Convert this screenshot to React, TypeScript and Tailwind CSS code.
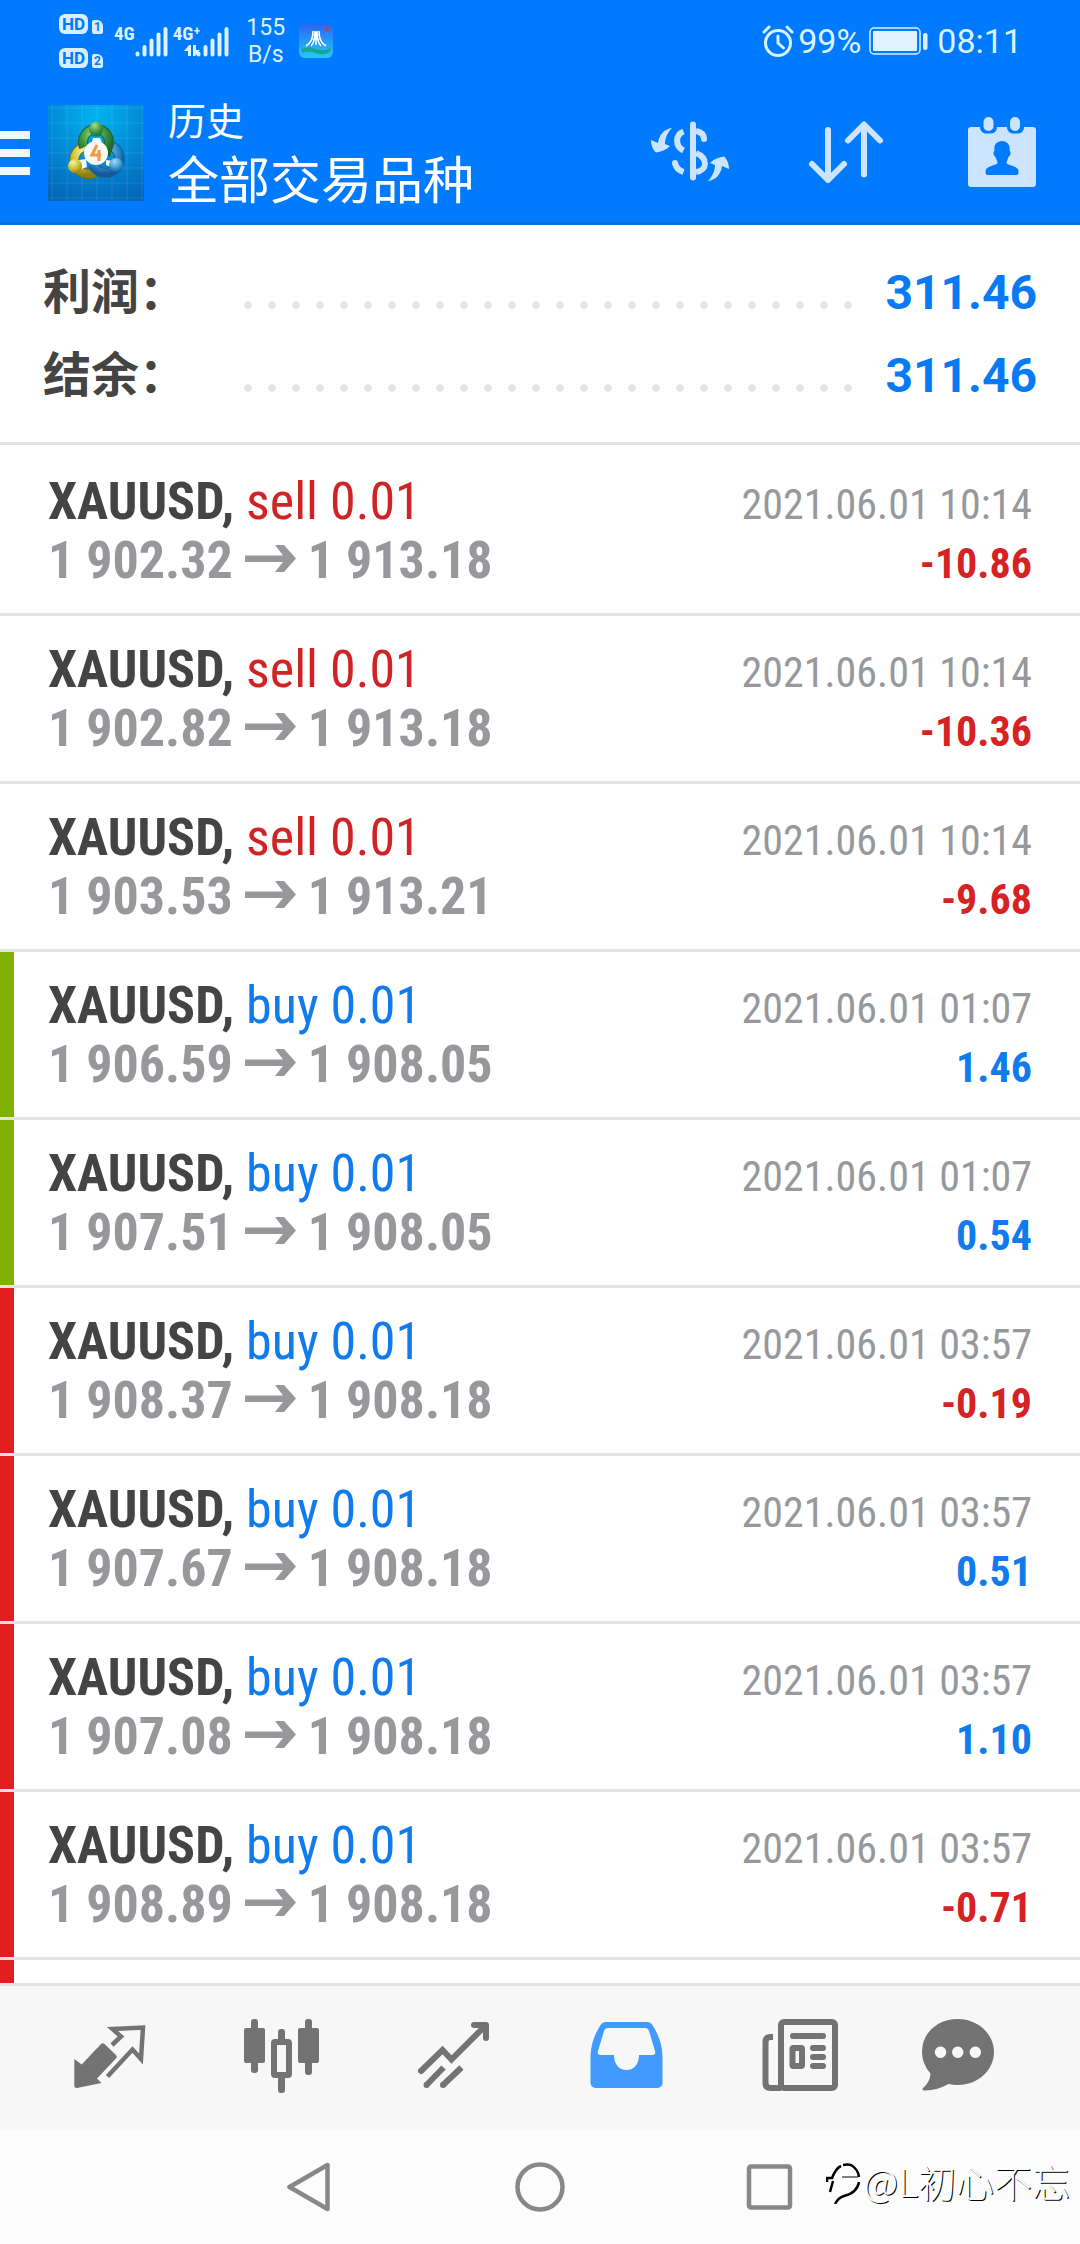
import React, { useState } from 'react';
import clsx from 'clsx';

type Deal = {
  side: 'buy' | 'sell';
  open: string;
  close: string;
  time: string;
  profit: string;
  mark?: 'tp' | 'sl';
};

const deals: Deal[] = [
  { side: 'sell', open: '1 902.32', close: '1 913.18', time: '2021.06.01 10:14', profit: '-10.86' },
  { side: 'sell', open: '1 902.82', close: '1 913.18', time: '2021.06.01 10:14', profit: '-10.36' },
  { side: 'sell', open: '1 903.53', close: '1 913.21', time: '2021.06.01 10:14', profit: '-9.68' },
  { side: 'buy', open: '1 906.59', close: '1 908.05', time: '2021.06.01 01:07', profit: '1.46', mark: 'tp' },
  { side: 'buy', open: '1 907.51', close: '1 908.05', time: '2021.06.01 01:07', profit: '0.54', mark: 'tp' },
  { side: 'buy', open: '1 908.37', close: '1 908.18', time: '2021.06.01 03:57', profit: '-0.19', mark: 'sl' },
  { side: 'buy', open: '1 907.67', close: '1 908.18', time: '2021.06.01 03:57', profit: '0.51', mark: 'sl' },
  { side: 'buy', open: '1 907.08', close: '1 908.18', time: '2021.06.01 03:57', profit: '1.10', mark: 'sl' },
  { side: 'buy', open: '1 908.89', close: '1 908.18', time: '2021.06.01 03:57', profit: '-0.71', mark: 'sl' },
];

const summary = [
  { label: '利润', value: '311.46' },
  { label: '结余', value: '311.46' },
];

function HdBadge({ sim }: { sim: string }) {
  return (
    <div className="flex items-end gap-1">
      <span className="flex h-5 w-[29px] items-center justify-center rounded-md bg-[#d6eeff] font-['Roboto'] text-[17px] leading-none font-bold text-[#007aff]">
        HD
      </span>
      <span className="flex h-3.5 w-[11px] items-center justify-center rounded-tr-md rounded-xs bg-[#d6eeff] font-['Roboto'] text-[12px] leading-none font-bold text-[#007aff]">
        {sim}
      </span>
    </div>
  );
}

function Signal({ label, active }: { label: string; active?: boolean }) {
  return (
    <div className="flex h-[31px]">
      <div className="flex flex-col justify-between">
        <span className="font-['Roboto_Condensed'] text-[19px] leading-4 font-bold">{label}</span>
        {active && (
          <svg viewBox="0 0 16 12" className="h-3 w-4 self-end" fill="currentColor">
            <path d="M0 6L5 0h2v11H4V6zM9 0h3v5h4l-5 6H9z" />
          </svg>
        )}
      </div>
      <svg
        viewBox="0 0 34 31"
        className={clsx('h-[31px] w-[34px]', active && '-ml-1')}
        stroke="currentColor"
        strokeWidth="4"
        strokeLinecap="round"
      >
        <path d="M2.5 27.5v1M9.500 21v7.500M16.500 14.500v14M23.500 8.500v20M30.500 3v25.500" />
      </svg>
    </div>
  );
}

function StatusBar() {
  return (
    <div className="flex h-[78px] items-center justify-between pt-1 pr-[58px] pl-[59px] font-['Roboto'] text-[#dcf3ff]">
      <div className="flex items-center">
        <div className="flex w-[55px] flex-col gap-3.5">
          <HdBadge sim="1" />
          <HdBadge sim="2" />
        </div>
        <div className="flex gap-1">
          <Signal label="4G" />
          <Signal label="4G⁺" active />
        </div>
        <div className="ml-4 text-center text-[23px] leading-[27px]">
          155
          <br />
          B/s
        </div>
        <svg viewBox="0 0 34 34" className="ml-3.5 size-[34px]">
          <defs>
            <linearGradient id="badge" x1="0" y1="0" x2="0" y2="1">
              <stop offset="0" stopColor="#2a66f2" />
              <stop offset="1" stopColor="#25c9ff" />
            </linearGradient>
          </defs>
          <rect width="34" height="34" rx="6" fill="url(#badge)" />
          <path d="M2 26q8-3 15 0t15-1M3 28q7-3 14 0t14-1" stroke="#19a58a" strokeWidth="2" fill="none" />
          <g stroke="#fff" strokeWidth="1.500" fill="none">
            <path d="M14 7q0 11-7 15M16 7q0 11-4 15M18 7q0 11 4 15M20 7q0 11 7 15M17 8v13" />
          </g>
          <path d="M13.500 11h7M12.500 15h9" stroke="#fff" strokeWidth="1" />
          <path d="M26 3h4v2l-2 3h-1V5h-1z" fill="#b8405f" />
        </svg>
      </div>

      <div className="flex items-center text-[34px] leading-10">
        <svg viewBox="0 0 32 32" className="mr-1 size-8" fill="none" stroke="currentColor" strokeWidth="3">
          <circle cx="16" cy="18" r="12.500" />
          <path d="M16 11v7l5.500 5M2 7l5-5M30 7l-5-5" strokeLinecap="round" />
        </svg>
        99%
        <svg viewBox="0 0 60 28" className="mx-2 h-7 w-[60px]">
          <rect x="1" y="1" width="50" height="26" rx="4" fill="none" stroke="currentColor" strokeWidth="1.500" />
          <rect x="4" y="4" width="44" height="20" rx="1" fill="#e4f1ff" />
          <rect x="54" y="6" width="4.500" height="17" rx="2" fill="currentColor" />
        </svg>
        08:11
      </div>
    </div>
  );
}

function AppLogo() {
  return (
    <svg viewBox="0 0 96 96" className="size-24">
      <defs>
        <radialGradient id="sky" cx="0.5" cy="0.1" r="1">
          <stop offset="0" stopColor="#00b4ee" />
          <stop offset="0.5" stopColor="#0289d6" />
          <stop offset="1" stopColor="#0463b4" />
        </radialGradient>
        <radialGradient id="green" cx="0.4" cy="0.25" r="0.8">
          <stop offset="0" stopColor="#a6dd92" />
          <stop offset="0.6" stopColor="#3d9440" />
          <stop offset="1" stopColor="#1d6a2b" />
        </radialGradient>
        <radialGradient id="yellow" cx="0.35" cy="0.25" r="0.8">
          <stop offset="0" stopColor="#f6f2a0" />
          <stop offset="0.6" stopColor="#c9bd2e" />
          <stop offset="1" stopColor="#8c7f12" />
        </radialGradient>
        <radialGradient id="blue" cx="0.4" cy="0.25" r="0.8">
          <stop offset="0" stopColor="#a5dcf7" />
          <stop offset="0.6" stopColor="#3a95d3" />
          <stop offset="1" stopColor="#125a9c" />
        </radialGradient>
      </defs>
      <rect width="96" height="96" fill="url(#sky)" />
      <path
        d="M4 0v96M19 0v96M34 0v96M49 0v96M64 0v96M79 0v96M94 0v96M0 3h96M0 18h96M0 33h96M0 48h96M0 63h96M0 78h96M0 93h96"
        stroke="#fff"
        strokeOpacity="0.1"
      />
      <path d="M40 41a14 14 0 1 0 9 25" fill="none" stroke="#6f6a14" strokeWidth="10" />
      <path d="M40 41a14 14 0 1 0 9 25" fill="none" stroke="url(#yellow)" strokeWidth="8" />
      <path d="M60 40a14 14 0 1 1-15 20" fill="none" stroke="#155a94" strokeWidth="10" />
      <path d="M60 40a14 14 0 1 1-15 20" fill="none" stroke="url(#blue)" strokeWidth="8" />
      <path d="M36 42a13 13 0 1 1 24 0l-3 8" fill="none" stroke="#1e642c" strokeWidth="10" />
      <path d="M36 42a13 13 0 1 1 24 0l-3 8" fill="none" stroke="url(#green)" strokeWidth="8" />
      <path d="M45 33h7l3 7-6 4-6-3zM31 55l7-1 1 8-8 3zM58 55l7 1v7l-7-3z" fill="#f4f8f4" />
      <ellipse cx="48" cy="24" rx="7" ry="7.500" fill="url(#green)" />
      <circle cx="27" cy="61" r="7" fill="url(#yellow)" />
      <circle cx="68" cy="60" r="7" fill="url(#blue)" />
      <circle cx="48" cy="48" r="12" fill="#f7f7f7" />
      <path d="M49 40l-5 10h9M51 45v11" fill="none" stroke="#f19a3e" strokeWidth="3" />
    </svg>
  );
}

function Header() {
  return (
    <header className="shrink-0 border-b-[3px] border-[#0d6ed8] bg-[#007aff]">
      <StatusBar />
      <div className="flex h-36 items-center justify-between pt-1.5">
        <div className="flex items-center">
          <button aria-label="Menu" className="flex w-12 flex-col gap-2.5">
            <span className="h-2 w-[30px] bg-[#eff8ff]" />
            <span className="h-2 w-[30px] bg-[#eff8ff]" />
            <span className="h-2 w-[30px] bg-[#eff8ff]" />
          </button>
          <AppLogo />
          <div className="ml-6 pt-1.5 text-white">
            <p className="text-[38px] leading-[52px]">历史</p>
            <h1 className="text-[51px] leading-[68px]">全部交易品种</h1>
          </div>
        </div>

        <div className="flex text-[#cce4ff]">
          <button aria-label="Symbols" className="flex w-[156px] justify-center">
            <svg viewBox="0 0 80 80" className="size-20" fill="none" stroke="currentColor" strokeWidth="6">
              <path d="M43 11.500v53" strokeLinecap="round" />
              <path d="M33.500 18.500C25 22 25 33 33.500 37.500" />
              <path d="M46 18C51 19 54 22 54 26" />
              <path d="M46 40C58 45 58 57 46 59" />
              <path d="M25 50C26 54.500 29 57.500 33.500 59" />
              <circle cx="25" cy="50" r="3" fill="currentColor" stroke="none" />
              <circle cx="54" cy="26" r="3" fill="currentColor" stroke="none" />
              <g fill="currentColor" stroke="none">
                <path d="M22 15C14 16 9 22 8 30L1 27C1 32 3 37 6 39.500C11 39 16 37 20 33L15 31C15 25 18 19 22 15Z" />
                <path
                  d="M22 15C14 16 9 22 8 30L1 27C1 32 3 37 6 39.500C11 39 16 37 20 33L15 31C15 25 18 19 22 15Z"
                  transform="rotate(180 40 41.500)"
                />
              </g>
            </svg>
          </button>
          <button aria-label="Sort" className="flex w-[156px] justify-center">
            <svg
              viewBox="0 0 80 80"
              className="size-20"
              fill="none"
              stroke="currentColor"
              strokeWidth="6"
              strokeLinecap="round"
              strokeLinejoin="round"
            >
              <path d="M22 17v50M6 51l16 16 16-16M58 61.500V12M42 27.500L58 11.500l16 16" />
            </svg>
          </button>
          <button aria-label="Period" className="flex w-[156px] justify-center">
            <svg viewBox="0 0 80 80" className="size-20" fill="currentColor">
              <path
                fillRule="evenodd"
                d="M9 14h9c0 4 3 6.500 6 6.500h5c4 0 6-3 6-6.500h10c0 4 3 6.500 6 6.500h5c4 0 6-3 6-6.500h9a3 3 0 0 1 3 3v54a3 3 0 0 1-3 3H9a3 3 0 0 1-3-3V17a3 3 0 0 1 3-3zM40 28c-6 0-8.500 5-7.500 10-2 1-1 5 1 6 1 3 2 4 2 6 0 2-12 3-12 8v2a2 2 0 0 0 2 2h29a2 2 0 0 0 2-2v-2c0-5-12-6-12-8 0-2 1-3 2-6 2-1 3-5 1-6 1-5-1.500-10-7.500-10z"
              />
              <rect x="21.500" y="4" width="10" height="14" rx="5" />
              <rect x="48" y="4" width="10" height="14" rx="5" />
            </svg>
          </button>
        </div>
      </div>
    </header>
  );
}

function PriceArrow() {
  return (
    <svg viewBox="0 0 51 33" className="h-[33px] w-[51px]" fill="currentColor" role="img" aria-label="to">
      <path d="M0 10.500h38L30 0h9l12 13.500L39 27h-9l8-10H0z" />
    </svg>
  );
}

function DealRow({ deal }: { deal: Deal }) {
  return (
    <li className="flex h-[168px] shrink-0 border-b-[3px] border-[#e4e4e4]">
      <div
        className={clsx(
          'w-3.5 shrink-0',
          deal.mark === 'tp' && 'bg-[#80b000]',
          deal.mark === 'sl' && 'bg-[#e31e1e]'
        )}
      />
      <div className="flex-1 pt-6 pr-12 pl-[34px] font-['Roboto_Condensed'] text-[42px] leading-[59px] text-[#97989c]">
        <div className="flex h-[59px] items-baseline justify-between">
          <div className="text-[52px]">
            <b className="text-[#444]">XAUUSD,</b>{' '}
            <span className={deal.side === 'buy' ? 'text-[#0f7bec]' : 'text-[#cf2325]'}>{deal.side} 0.01</span>
          </div>
          <time>{deal.time}</time>
        </div>
        <div className="flex h-[59px] items-baseline justify-between font-bold">
          <div className="flex items-baseline gap-3 text-[52px]">
            {deal.open}
            <PriceArrow />
            {deal.close}
          </div>
          <span className={deal.profit.startsWith('-') ? 'text-[#d62222]' : 'text-[#0f7bec]'}>{deal.profit}</span>
        </div>
      </div>
    </li>
  );
}

const tabs = [
  {
    id: 'quotes',
    box: '0 0 80 80',
    icon: (
      <>
        <path d="M4.300 41l7.400 5.500L31 26a2.500 2.500 0 0 1 3.500 0L46 37a2.500 2.500 0 0 1 0 3.500L27 60.500l4.500 4.500L7 70a2.500 2.500 0 0 1-2.700-2.500z" />
        <path
          d="M42 27l9-8.500-8.500-7.500L73 9.500l-2 31.500-8.500-9.500L37.500 58.500"
          fill="none"
          stroke="currentColor"
          strokeWidth="4.500"
        />
      </>
    ),
  },
  {
    id: 'chart',
    box: '0 0 80 80',
    icon: (
      <>
        <rect x="2" y="10" width="21" height="35" rx="2" />
        <rect x="9" y="1" width="7" height="54" rx="3" />
        <rect x="56" y="10" width="21" height="35" rx="2" />
        <rect x="63" y="1" width="7" height="56" rx="3" />
        <rect x="36" y="11" width="7" height="14" rx="3" />
        <rect x="36" y="57" width="7" height="18" rx="3" />
        <rect x="32" y="24" width="15" height="33" rx="1" fill="none" stroke="currentColor" strokeWidth="6" />
      </>
    ),
  },
  {
    id: 'trade',
    box: '0 0 80 80',
    icon: (
      <g fill="none" stroke="currentColor" strokeWidth="6">
        <path d="M7 53l21.500-21 9 9.500L71 8" strokeLinecap="round" />
        <path d="M60 7h12v13" strokeLinecap="round" strokeLinejoin="round" />
        <path d="M12 67.500l17.500-18M28.500 67.500l19-18" />
        <circle cx="12.500" cy="67" r="3" fill="currentColor" stroke="none" />
        <circle cx="29" cy="67" r="3" fill="currentColor" stroke="none" />
      </g>
    ),
  },
  {
    id: 'history',
    box: '0 0 80 80',
    icon: (
      <path
        fillRule="evenodd"
        d="M20 4h41q4 0 6 4 9 14 9.500 30v27a5 5 0 0 1-5 5h-62a5 5 0 0 1-5-5V38Q5 22 14 8q2-4 6-4zM22 10q-3 0-4 3l-6 20q-1 4 2.500 4H28c0 9 5 15 12.500 15S53 46 53 37h13.500q3.500 0 2.500-4l-6-20q-1-3-4-3z"
      />
    ),
  },
  {
    id: 'news',
    box: '0 0 80 80',
    icon: (
      <>
        <g fill="none" stroke="currentColor" strokeWidth="6">
          <rect x="23" y="4" width="54" height="66" rx="3" />
          <path d="M15 19h-2.500q-5 0-5 5v41q0 5 5 5H23" />
          <rect x="34.500" y="30" width="9.500" height="18" rx="1" />
        </g>
        <rect x="32" y="15" width="36" height="6" rx="3" />
        <rect x="52" y="27" width="16" height="6" rx="3" />
        <rect x="52" y="36" width="16" height="6" rx="3" />
        <rect x="52" y="45" width="16" height="6" rx="3" />
      </>
    ),
  },
  {
    id: 'messages',
    box: '0 0 104 80',
    icon: (
      <path
        fillRule="evenodd"
        d="M40 1c20 0 36 15 36 33S60 67 40 67q-5 0-9.500-1Q18 73 6 72.500q-3-.5-.5-3Q12 64 12.500 55.500 4 46 4 34 4 16 20 6 29 1 40 1zM22.500 28.500a5.700 5.700 0 1 0 .1 0zM39.700 28.500a5.700 5.700 0 1 0 .1 0zM57.300 28.500a5.700 5.700 0 1 0 .1 0z"
      />
    ),
  },
];

export default function App() {
  const [activeTab, setActiveTab] = useState('history');

  return (
    <div className="flex h-screen flex-col bg-white font-['Roboto','Noto_Sans_CJK_SC',sans-serif]">
      <Header />

      <section className="shrink-0 border-b-[3px] border-[#e4e4e4] px-[43px] pt-[26px] pb-[25px] text-5xl font-bold">
        {summary.map((item) => (
          <div key={item.label} className="flex h-[83px] items-center leading-[83px]">
            <span className="w-[193px] text-[#444]">{item.label}：</span>
            <span className="mt-6 h-2 flex-1 bg-[radial-gradient(circle,#e4e4e4_3.5px,transparent_4px)] bg-[length:24px_8px] bg-repeat-x" />
            <span className="ml-6 text-[#077bf5]">{item.value}</span>
          </div>
        ))}
      </section>

      <main className="min-h-0 flex-1 overflow-hidden pt-[3px]">
        <ul className="flex flex-col">
          {deals.map((deal) => (
            <DealRow key={deal.open} deal={deal} />
          ))}
          <li className="flex h-[168px] shrink-0">
            <div className="w-3.5 bg-[#e31e1e]" />
          </li>
        </ul>
      </main>

      <nav className="grid h-[147px] shrink-0 grid-cols-6 border-t-[3px] border-[#e4e4e4] bg-[#f7f7f7] px-6">
        {tabs.map((tab) => (
          <button
            key={tab.id}
            aria-label={tab.id}
            onClick={() => setActiveTab(tab.id)}
            className={clsx(
              'flex items-center justify-center',
              activeTab === tab.id ? 'text-[#419bff]' : 'text-[#737373]'
            )}
          >
            <svg viewBox={tab.box} className="h-20" fill="currentColor">
              {tab.icon}
            </svg>
          </button>
        ))}
      </nav>

      <footer className="relative flex h-[114px] shrink-0 items-center justify-center gap-[180px] bg-[#fcfcfc] text-[#888]">
        <button aria-label="Back">
          <svg viewBox="0 0 50 50" className="size-[50px]" fill="none" stroke="currentColor" strokeWidth="4.500">
            <path d="M4.500 25L42.500 3v44z" strokeLinejoin="round" />
          </svg>
        </button>
        <button aria-label="Home">
          <svg viewBox="0 0 50 50" className="size-[50px]" fill="none" stroke="currentColor" strokeWidth="4.500">
            <circle cx="25" cy="25" r="22.500" />
          </svg>
        </button>
        <button aria-label="Recent">
          <svg viewBox="0 0 50 50" className="size-[50px]" fill="none" stroke="currentColor" strokeWidth="4.500">
            <rect x="4" y="4.500" width="41" height="41" rx="2" />
          </svg>
        </button>

        <div className="absolute right-2.5 bottom-10 flex items-center gap-0.5">
          <svg viewBox="0 0 36 46" className="h-[46px] w-9" fill="none" strokeLinecap="round">
            <g stroke="#fff" strokeWidth="6">
              <path d="M2 19h7q4-13 14-13 10 2 11 13-2 18-17 21l-6 4M6 19L4 31M16 18h17" />
            </g>
            <g stroke="#000" strokeWidth="2.500" strokeLinecap="butt">
              <path d="M1 24v-4h5q4-10 9-12M17 7q5-1 8 0 7 4 8 12M33 24q-2 11-15 14-6 2-9 8M7 23L4 34" />
              <path d="M16 19h16" strokeWidth="1" />
            </g>
          </svg>
          <span className="font-['Noto_Sans_CJK_SC'] text-[38px] leading-[46px] font-light text-white [text-shadow:1px_1px_0_#000]">
            @L初心不忘
          </span>
        </div>
      </footer>
    </div>
  );
}
